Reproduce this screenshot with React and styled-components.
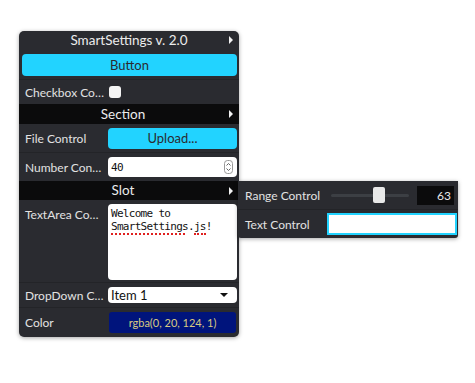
import React from "react";
import styled, { createGlobalStyle } from "styled-components";

const Global = createGlobalStyle`
  html, body { margin: 0; padding: 0; background: #fff; }
  body { font-family: Lato, "Open Sans", sans-serif; }
  input[type=number]::-webkit-inner-spin-button,
  input[type=number]::-webkit-outer-spin-button { -webkit-appearance: none; margin: 0; }
`;

const Desk = styled.div`
  position: relative;
  width: 475px;
  height: 383px;
  padding: 31px 0 0 19px;
  box-sizing: border-box;
`;

const Panel = styled.div`
  width: 220px;
  background: #2a2b30;
  border-radius: 5px;
  box-shadow: 0 1px 4px rgba(0,0,0,0.35);
  overflow: hidden;
  color: #e4e4e4;
  font-size: 13px;
  display: flex;
  flex-direction: column;
`;

const FloatPanel = styled(Panel)`
  position: absolute;
  left: 238px;
  top: 181px;
  border-radius: 0 0 3px 3px;
`;

const Header = styled.div`
  position: relative;
  height: ${p => p.$h || 19}px;
  line-height: ${p => p.$h || 19}px;
  text-align: center;
  background: ${p => (p.$dark ? "#0b0b0c" : "transparent")};
  color: #ececec;
  font-size: 13.5px;
  padding-right: ${p => p.$shift || 0}px;
`;

const Arrow = styled.span`
  position: absolute;
  right: 6px;
  top: 50%;
  margin-top: -4px;
  width: 0;
  height: 0;
  border-left: 4px solid #f2f2f2;
  border-top: 4px solid transparent;
  border-bottom: 4px solid transparent;
`;

const Row = styled.div`
  display: flex;
  align-items: ${p => p.$top ? "flex-start" : "center"};
  height: ${p => p.$h}px;
  padding: ${p => p.$pad || "0 2px 0 3px"};
  box-sizing: border-box;
  border-bottom: ${p => (p.$line ? "1px solid #232428" : "none")};
`;

const Label = styled.div`
  width: ${p => p.$w || 86}px;
  flex: none;
  padding-left: 3px;
  box-sizing: border-box;
  white-space: nowrap;
  overflow: hidden;
  color: #e2e2e2;
  font-size: 12px;
  padding-top: ${p => p.$pt || 0}px;
`;

const CyanButton = styled.button`
  flex: 1;
  height: ${p => p.$h}px;
  border: none;
  border-radius: 4px;
  background: #22d3ff;
  color: #2a2b30;
  font-family: Lato, sans-serif;
  font-size: 13px;
  padding: 0;
  cursor: pointer;
`;

const Check = styled.span`
  width: 12px;
  height: 12px;
  background: #f4f4f4;
  border-radius: 3px;
  margin-left: 1px;
`;

const Field = styled.div`
  position: relative;
  flex: 1;
  min-width: 0;
  display: flex;
`;

const NumberInput = styled.input`
  flex: 1;
  min-width: 0;
  height: 20px;
  box-sizing: border-box;
  border: none;
  border-radius: 4px;
  background: #fff;
  color: #111;
  font-family: "DejaVu Sans Mono", monospace;
  font-size: 11px;
  letter-spacing: -0.7px;
  padding: 0 3px;
  outline: none;
`;

const Spinner = styled.svg`
  position: absolute;
  right: 4px;
  top: 3px;
  pointer-events: none;
`;

const TextArea = styled.textarea`
  flex: 1;
  min-width: 0;
  height: 76px;
  box-sizing: border-box;
  border: none;
  border-radius: 4px;
  background: #fff;
  color: #111;
  font-family: "DejaVu Sans Mono", monospace;
  font-size: 11px;
  letter-spacing: -0.7px;
  line-height: 13px;
  padding: 3px 3px;
  resize: none;
  outline: none;
`;

const Squiggle = styled.span`
  position: absolute;
  top: 29px;
  left: ${p => p.$x}px;
  width: ${p => p.$w}px;
  height: 0;
  border-bottom: 2px dotted #e0201f;
  pointer-events: none;
`;

const SelectWrap = styled.div`
  position: relative;
  flex: 1;
  height: 16px;
  background: #fff;
  border-radius: 4px;
`;

const Select = styled.select`
  appearance: none;
  -webkit-appearance: none;
  width: 100%;
  height: 16px;
  border: none;
  background: transparent;
  font-family: Lato, sans-serif;
  font-size: 13px;
  color: #111;
  padding: 0 0 0 3px;
  line-height: 16px;
  outline: none;
`;

const SelectArrow = styled.span`
  position: absolute;
  right: 9px;
  top: 6px;
  width: 0;
  height: 0;
  border-top: 4px solid #111;
  border-left: 4px solid transparent;
  border-right: 4px solid transparent;
  pointer-events: none;
`;

const ColorBox = styled.div`
  flex: 1;
  height: 21px;
  margin: 0 1px 0 1px;
  border-radius: 3px;
  background: ${p => p.$c};
  color: #d8c982;
  font-size: 11px;
  display: flex;
  align-items: center;
  justify-content: center;
`;

const Slider = styled.div`
  position: relative;
  width: 78px;
  height: 16px;
  margin-left: -1px;
  display: flex;
  align-items: center;
`;

const Track = styled.div`
  width: 100%;
  height: 3px;
  background: #3c3f44;
  border-radius: 2px;
`;

const Thumb = styled.div`
  position: absolute;
  top: 0;
  width: 12px;
  height: 16px;
  background: #e8e8e8;
  border-radius: 2px;
`;

const NumBox = styled.div`
  width: 37px;
  height: 19px;
  margin-left: 8px;
  background: #0b0b0c;
  color: #e8e8e8;
  font-size: 12px;
  text-align: right;
  line-height: 19px;
  padding-right: 3px;
  box-sizing: border-box;
`;

const TextInput = styled.input`
  flex: 1;
  min-width: 0;
  height: 22px;
  box-sizing: border-box;
  border: 2px solid #22d3ff;
  background: #fff;
  outline: none;
  padding: 0 3px;
`;

export default function App() {
  const range = 63;
  return (
    <>
      <Global />
      <Desk>
        <Panel>
          <Header $h={18}>
            SmartSettings v. 2.0
            <Arrow />
          </Header>
          <Row $h={31} $line $pad="1px 2px 0 3px">
            <CyanButton $h={22}>Button</CyanButton>
          </Row>
          <Row $h={24}>
            <Label title="Checkbox Control">Checkbox Co…</Label>
            <Check />
          </Row>
          <Header $dark $h={20} $shift={12}>
            Section
            <Arrow />
          </Header>
          <Row $h={29} $line>
            <Label>File Control</Label>
            <CyanButton $h={21}>Upload...</CyanButton>
          </Row>
          <Row $h={28}>
            <Label title="Number Control">Number Con…</Label>
            <Field>
              <NumberInput type="number" defaultValue={40} />
              <Spinner width="9" height="14" viewBox="0 0 9 14">
                <rect x="0.5" y="0.5" width="8" height="13" rx="3" fill="#fff" stroke="#999" />
                <path d="M2.5 5.5 L4.5 3.5 L6.5 5.5" fill="none" stroke="#555" strokeWidth="0.9" />
                <path d="M2.5 8.5 L4.5 10.5 L6.5 8.5" fill="none" stroke="#555" strokeWidth="0.9" />
              </Spinner>
            </Field>
          </Row>
          <Header $dark $h={19} $shift={12}>
            Slot
            <Arrow />
          </Header>
          <Row $h={83} $line $pad="4px 2px 0 3px" $top>
            <Label $pt={3} title="TextArea Control">TextArea Co…</Label>
            <Field>
              <TextArea spellCheck={false} defaultValue={"Welcome to\nSmartSettings.js!"} />
              <Squiggle $x={3} $w={74} />
              <Squiggle $x={86} $w={12} />
            </Field>
          </Row>
          <Row $h={25} $line>
            <Label title="DropDown Control">DropDown C…</Label>
            <SelectWrap>
              <Select defaultValue="Item 1">
                <option>Item 1</option>
                <option>Item 2</option>
              </Select>
              <SelectArrow />
            </SelectWrap>
          </Row>
          <Row $h={29}>
            <Label>Color</Label>
            <ColorBox $c="rgba(0, 20, 124, 1)">rgba(0, 20, 124, 1)</ColorBox>
          </Row>
        </Panel>

        <FloatPanel>
          <Row $h={29} $line $pad="0 2px 0 4px">
            <Label $w={90}>Range Control</Label>
            <Slider>
              <Track />
              <Thumb style={{ left: `${(range / 100) * 66}px` }} />
            </Slider>
            <NumBox>{range}</NumBox>
          </Row>
          <Row $h={28} $pad="0 1px 0 4px">
            <Label $w={85}>Text Control</Label>
            <TextInput />
          </Row>
        </FloatPanel>
      </Desk>
    </>
  );
}
